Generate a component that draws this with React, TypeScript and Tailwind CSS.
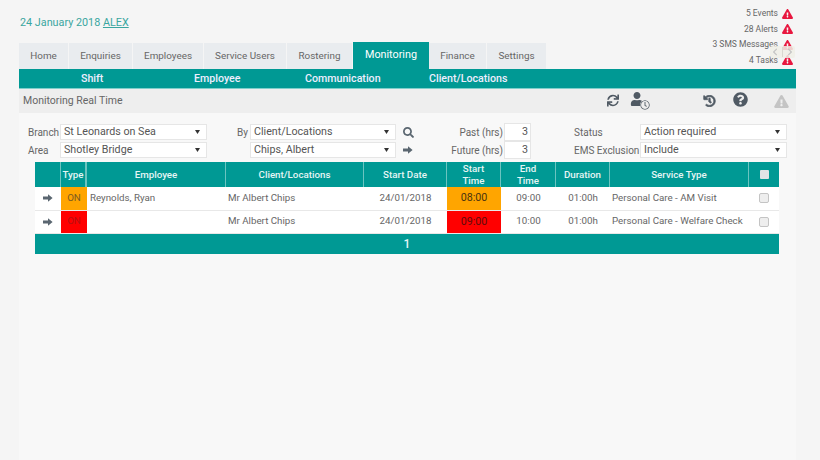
import { FaExclamationTriangle, FaHistory, FaQuestionCircle, FaRegClock, FaSearch, FaSync, FaUser, FaChevronLeft, FaChevronRight } from 'react-icons/fa';

const tabs = [
  { label: 'Home', w: 'w-[50px]' },
  { label: 'Enquiries', w: 'w-[64px]' },
  { label: 'Employees', w: 'w-[71px]' },
  { label: 'Service Users', w: 'w-[83px]' },
  { label: 'Rostering', w: 'w-[66px]' },
  { label: 'Monitoring', w: 'w-[76px]', active: true },
  { label: 'Finance', w: 'w-[58px]' },
  { label: 'Settings', w: 'w-[60px]' },
];

const alerts = ['5 Events', '28 Alerts', '3 SMS Messages', '4 Tasks'];

const rows = [
  { color: 'bg-[#ffa500]', on: 'text-[#7a5a20]', time: 'text-[#4a3410]', employee: 'Reynolds, Ryan', start: '08:00', end: '09:00', service: 'Personal Care - AM Visit' },
  { color: 'bg-[#ff0000]', on: 'text-[#b81010]', time: 'text-[#600c0c]', employee: '', start: '09:00', end: '10:00', service: 'Personal Care - Welfare Check' },
];

const Arrow = () => (
  <svg width="10" height="8" viewBox="0 0 10 8" className="shrink-0">
    <path d="M0 2.6h5V0.2L9.6 4 5 7.8V5.4H0z" fill="#5a6670" />
  </svg>
);

const Select = ({ value, className }: { value: string; className: string }) => (
  <div className={`flex h-[16px] items-center justify-between border border-[#e6e6e6] bg-white pl-[3px] pr-[6px] text-[10.7px] text-[#555] ${className}`}>
    <span>{value}</span>
    <svg width="5" height="4" viewBox="0 0 5 4"><path d="M0 0h5L2.5 4z" fill="#333" /></svg>
  </div>
);

const NumberBox = ({ value }: { value: string }) => (
  <div className="flex h-[18px] w-[27px] items-center justify-end border border-[#e6e6e6] bg-white pr-[2px] text-[10.7px] text-[#555]">{value}</div>
);

const App = () => {
  return (
    <div className="relative h-[460px] w-[820px] overflow-hidden bg-[#f5f5f5] font-['Roboto',sans-serif]">
      {/* Top */}
      <div className="flex h-[42px] w-[796px] justify-between">
        <div className="pl-[20px] pt-[15px] text-[10.8px] leading-[16px] text-[#3aa6a0]">
          24 January 2018 <span className="underline">ALEX</span>
        </div>
        <div className="flex w-[240px] flex-col items-end pr-[3px] pt-[6px]">
          {alerts.map((a) => (
            <div key={a} className="flex h-[15.5px] shrink-0 items-center gap-[4px] text-[8.5px] text-[#666]">
              <span>{a}</span>
              <FaExclamationTriangle className="h-[10px] w-[11px] text-[#e8173f]" />
            </div>
          ))}
        </div>
      </div>

      {/* Tabs */}
      <div className="ml-[19px] flex h-[27px] items-end">
        {tabs.map((t) => (
          <div
            key={t.label}
            className={
              t.active
                ? `flex h-[27px] items-center justify-center bg-[#009994] pb-[1px] text-[10.8px] text-white ${t.w}`
                : `flex h-[26px] items-center justify-center border-r border-[#f5f5f5] bg-[#e9ecef] text-[9.9px] text-[#666] ${t.w}`
            }
          >
            {t.label}
          </div>
        ))}
      </div>

      <div className="ml-[19px] w-[777px] bg-[#f8f8f8] pb-[300px]">
        {/* Sub menu */}
        <div className="relative flex h-[20px] items-center border-b border-[#7fcfcb] bg-[#009994] text-[10.65px] font-medium text-[#eef]">
          <span className="ml-[62px] w-[113px]">Shift</span>
          <span className="w-[111px]">Employee</span>
          <span className="w-[124px]">Communication</span>
          <span>Client/Locations</span>
        </div>

        {/* Title */}
        <div className="flex h-[24px] items-center bg-[#eeeeee] pl-[4px] text-[10.5px] text-[#666]">
          <span>Monitoring Real Time</span>
          <div className="relative ml-auto h-[24px] w-[190px]">
            <FaSync className="absolute left-[1px] top-[5px] h-[13px] w-[12px] text-[#505a64]" />
            <FaUser className="absolute left-[24px] top-[3px] h-[14px] w-[14px] text-[#505a64]" />
            <FaRegClock className="absolute left-[34px] top-[11px] h-[10px] w-[10px] rounded-full bg-[#eeeeee] text-[#6b747c]" />
            <FaHistory strokeWidth={30} className="absolute left-[97px] top-[6px] h-[12px] w-[13px] text-[#505a64]" />
            <FaQuestionCircle className="absolute left-[127px] top-[3px] h-[15px] w-[15px] text-[#505a64]" />
            <FaExclamationTriangle className="absolute left-[168px] top-[6px] h-[13px] w-[15px] text-[#c4c4c4]" />
          </div>
        </div>

        {/* Filters */}
        <div className="flex h-[49px] flex-col pt-[10px] text-[10px] text-[#666]">
          <div className="flex h-[18px] items-center">
            <span className="ml-[9px] w-[32px]">Branch</span>
            <Select value="St Leonards on Sea" className="w-[147px]" />
            <span className="w-[41px] text-right">By</span>
            <Select value="Client/Locations" className="ml-[2px] w-[146px]" />
            <FaSearch className="ml-[7px] h-[11px] w-[11px] shrink-0 text-[#5a6670]" />
            <span className="w-[89px] text-right">Past (hrs)</span>
            <div className="ml-[1px]"><NumberBox value="3" /></div>
            <span className="ml-[43px] w-[66px]">Status</span>
            <Select value="Action required" className="w-[147px]" />
          </div>
          <div className="flex h-[18px] items-center">
            <span className="ml-[9px] w-[32px]">Area</span>
            <Select value="Shotley Bridge" className="w-[147px]" />
            <Select value="Chips, Albert" className="ml-[43px] w-[146px]" />
            <div className="ml-[7px] w-[11px]"><Arrow /></div>
            <span className="w-[89px] text-right">Future (hrs)</span>
            <div className="ml-[1px]"><NumberBox value="3" /></div>
            <span className="ml-[43px] w-[66px] whitespace-nowrap">EMS Exclusion</span>
            <Select value="Include" className="w-[147px]" />
          </div>
        </div>

        {/* Table */}
        <div className="ml-[16px] w-[744px] text-[9.75px] text-[#666]">
          <div className="grid h-[25px] grid-cols-[26px_26px_139px_138px_83px_54px_55px_54px_139px_30px] bg-[#009994] text-center text-[9.75px] font-medium leading-[11.5px] text-[#e6f5f4]">
            <div className="border-r border-[#6cc4c0]" />
            <div className="flex items-center justify-center border-r-2 border-[#6cc4c0]">Type</div>
            <div className="flex items-center justify-center border-r border-[#6cc4c0]">Employee</div>
            <div className="flex items-center justify-center border-r border-[#6cc4c0]">Client/Locations</div>
            <div className="flex items-center justify-center border-r border-[#6cc4c0]">Start Date</div>
            <div className="flex items-center justify-center border-r border-[#6cc4c0]">Start<br />Time</div>
            <div className="flex items-center justify-center border-r border-[#6cc4c0]">End<br />Time</div>
            <div className="flex items-center justify-center border-r border-[#6cc4c0]">Duration</div>
            <div className="flex items-center justify-center border-r border-[#6cc4c0]">Service Type</div>
            <div className="flex items-center justify-center">
              <div className="h-[9px] w-[9px] rounded-[1px] bg-[#dfe3e6]" />
            </div>
          </div>
          {rows.map((r) => (
            <div key={r.start} className="grid h-[23.5px] grid-cols-[26px_26px_139px_138px_83px_54px_55px_54px_139px_30px] items-stretch border-b border-[#e8e8e8] bg-white">
              <div className="flex items-center justify-center">
                <Arrow />
              </div>
              <div className={`flex items-center justify-center ${r.color} ${r.on}`}>ON</div>
              <div className="flex items-center pl-[3px]">{r.employee}</div>
              <div className="flex items-center pl-[2px]">Mr Albert Chips</div>
              <div className="flex items-center justify-center">24/01/2018</div>
              <div className={`flex items-center justify-center text-[10.7px] ${r.color} ${r.time}`}>{r.start}</div>
              <div className="flex items-center justify-center">{r.end}</div>
              <div className="flex items-center justify-center">01:00h</div>
              <div className="flex items-center whitespace-nowrap pl-[2px]">{r.service}</div>
              <div className="flex items-center justify-center">
                <div className="h-[10px] w-[10px] rounded-[2px] border border-[#c4c4c4] bg-[#eeeeee]" />
              </div>
            </div>
          ))}
          <div className="flex h-[20px] items-center justify-center bg-[#009994] text-[12px] font-medium text-[#e6f5f4]">1</div>
        </div>
      </div>

      {/* Slider arrows over the alerts */}
      <div className="absolute left-[770px] top-[46px] flex h-[12px] w-[25px] items-center justify-around rounded-[2px] bg-[#eeeee6]/85 text-[#c4c4c4]">
        <FaChevronLeft className="h-[8px] w-[6px]" />
        <div className="h-[10px] w-px bg-[#d8d8d0]" />
        <FaChevronRight className="h-[8px] w-[6px]" />
      </div>
    </div>
  );
};

export default App;
